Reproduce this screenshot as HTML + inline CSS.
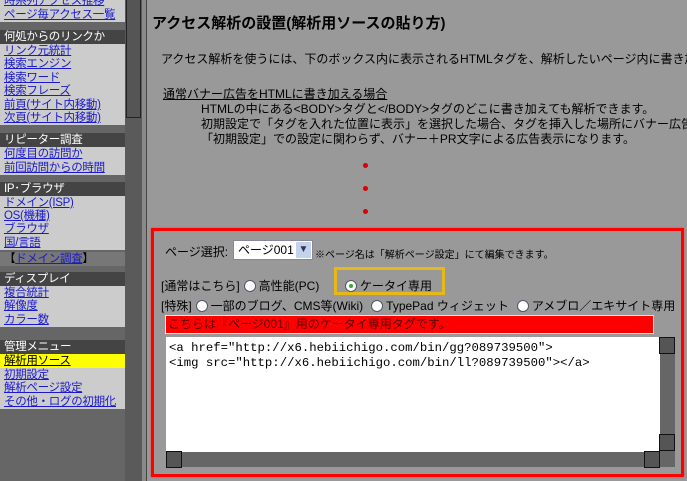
<!DOCTYPE html>
<html><head><meta charset="utf-8"><style>
*{margin:0;padding:0;box-sizing:border-box}
body{width:687px;height:481px;overflow:hidden;background:#999;font-family:"Liberation Sans","Noto Sans CJK JP",sans-serif;font-size:12px;color:#000;position:relative}
#side{position:absolute;left:0;top:0;width:125px;height:481px;background:#666}
.r{position:absolute;left:0;width:125px;height:14px;line-height:14px;font-size:11.5px;letter-spacing:-0.3px;padding-left:4px;white-space:nowrap;overflow:hidden}
.i{background:#ccc;color:#1a1acc;text-decoration:underline}
.h{background:#444;color:#fff}
#col{position:absolute;left:125px;top:0;width:17px;height:481px;background:#5a5a5a}
#colb{position:absolute;left:126px;top:0;width:15px;height:118px;background:#555;border:1px solid #222;border-top:none}
#strip{position:absolute;left:142px;top:0;width:4px;height:481px;background:#8a8a8a}
#main{position:absolute;left:146px;top:0;width:541px;height:481px;background:#999;border-left:1px solid #444}
.a{position:absolute;white-space:nowrap}
.dot{position:absolute;width:5px;height:5px;border-radius:50%;background:#d00}
.rad{display:inline-block;width:12px;height:12px;border-radius:50%;background:#fff;border:1px solid #556;vertical-align:-2px;margin:0 3px 0 4px;position:relative}
</style></head><body>
<div id="side">
<div class="r i" style="top:-6px">時系列アクセス推移</div>
<div class="r i" style="top:8px">ページ毎アクセス一覧</div>
<div class="r h" style="top:30px">何処からのリンクか</div>
<div class="r i" style="top:44px">リンク元統計</div>
<div class="r i" style="top:57px">検索エンジン</div>
<div class="r i" style="top:71px">検索ワード</div>
<div class="r i" style="top:84px">検索フレーズ</div>
<div class="r i" style="top:98px">前頁(サイト内移動)</div>
<div class="r i" style="top:111px;height:14px">次頁(サイト内移動)</div>
<div class="r h" style="top:133px">リピーター調査</div>
<div class="r i" style="top:147px">何度目の訪問か</div>
<div class="r i" style="top:161px">前回訪問からの時間</div>
<div class="r h" style="top:182px">IP･ブラウザ</div>
<div class="r i" style="top:196px">ドメイン(ISP)</div>
<div class="r i" style="top:209px">OS(機種)</div>
<div class="r i" style="top:222px">ブラウザ</div>
<div class="r i" style="top:236px">国/言語</div>
<div class="r" style="top:252px;background:#777;color:#000">【<span style="color:#1a1acc;text-decoration:underline">ドメイン調査</span>】</div>
<div class="r h" style="top:272px">ディスプレイ</div>
<div class="r i" style="top:286px">複合統計</div>
<div class="r i" style="top:299px">解像度</div>
<div class="r i" style="top:313px">カラー数</div>
<div class="r h" style="top:340px">管理メニュー</div>
<div class="r i" style="top:354px;background:#ff0;color:#000">解析用ソース</div>
<div class="r i" style="top:368px">初期設定</div>
<div class="r i" style="top:381px">解析ページ設定</div>
<div class="r i" style="top:395px">その他・ログの初期化</div>
</div>
<div id="col"></div><div id="colb"></div><div id="strip"></div>
<div id="main">
<div class="a" style="left:5px;top:12px;font-size:15px;font-weight:bold">アクセス解析の設置(解析用ソースの貼り方)</div>
<div class="a" style="left:14px;top:50px">アクセス解析を使うには、下のボックス内に表示されるHTMLタグを、解析したいページ内に書き加</div>
<div class="a" style="left:16px;top:85px;text-decoration:underline">通常バナー広告をHTMLに書き加える場合</div>
<div class="a" style="left:54px;top:102px;line-height:15px">HTMLの中にある&lt;BODY&gt;タグと&lt;/BODY&gt;タグのどこに書き加えても解析できます。<br>初期設定で「タグを入れた位置に表示」を選択した場合、タグを挿入した場所にバナー広告<br>「初期設定」での設定に関わらず、バナー＋PR文字による広告表示になります。</div>
<div class="dot" style="left:216px;top:163px"></div>
<div class="dot" style="left:216px;top:186px"></div>
<div class="dot" style="left:216px;top:209px"></div>
<div style="position:absolute;left:4px;top:228px;width:533px;height:249px;border:3px solid #f00;box-shadow:0 0 2px #f44"></div>
<div class="a" style="left:18px;top:243px">ページ選択:</div>
<div class="a" style="left:86px;top:240px;width:80px;height:20px;background:#fff;border:1px solid #889;padding-left:4px;line-height:18px">ページ001<span style="position:absolute;right:1px;top:1px;width:15px;height:16px;background:#c4d2ec;color:#335;font-size:10px;text-align:center;line-height:16px">▼</span></div>
<div class="a" style="left:168px;top:246px;font-size:10px">※ページ名は「解析ページ設定」にて編集できます。</div>
<div class="a" style="left:14px;top:277px">[通常はこちら]<span class="rad"></span>高性能(PC)</div>
<div class="a" style="left:187px;top:267px;width:111px;height:28px;border:3px solid #e8b818"></div>
<div class="a" style="left:194px;top:277px"><span class="rad"><span style="position:absolute;left:3px;top:3px;width:4px;height:4px;border-radius:50%;background:#3a3"></span></span>ケータイ専用</div>
<div class="a" style="left:14px;top:297px">[特殊]<span class="rad"></span>一部のブログ、CMS等(Wiki)<span class="rad" style="margin-left:8px"></span>TypePad ウィジェット<span class="rad" style="margin-left:8px"></span>アメブロ／エキサイト専用</div>
<div class="a" style="left:18px;top:315px;width:489px;height:19px;background:#f00;border:1px solid #fdd;color:#500;line-height:17px;padding-left:2px">こちらは『ページ001』用のケータイ専用タグです。</div>
<div class="a" style="left:19px;top:337px;width:494px;height:115px;background:#fff;font-family:'Liberation Mono',monospace;font-size:12.3px;line-height:15px;padding:4px 3px">&lt;a href="http://x6.hebiichigo.com/bin/gg?089739500"&gt;<br>&lt;img src="http://x6.hebiichigo.com/bin/ll?089739500"&gt;&lt;/a&gt;</div>
<div class="a" style="left:513px;top:337px;width:15px;height:130px;background:#666"></div>
<div class="a" style="left:19px;top:452px;width:494px;height:15px;background:#666"></div>
<div class="a" style="left:512px;top:337px;width:16px;height:17px;background:#555;border:1px solid #111"></div>
<div class="a" style="left:512px;top:434px;width:16px;height:17px;background:#555;border:1px solid #111"></div>
<div class="a" style="left:19px;top:451px;width:16px;height:17px;background:#555;border:1px solid #111"></div>
<div class="a" style="left:497px;top:451px;width:16px;height:17px;background:#555;border:1px solid #111"></div>
</div>
</body></html>
